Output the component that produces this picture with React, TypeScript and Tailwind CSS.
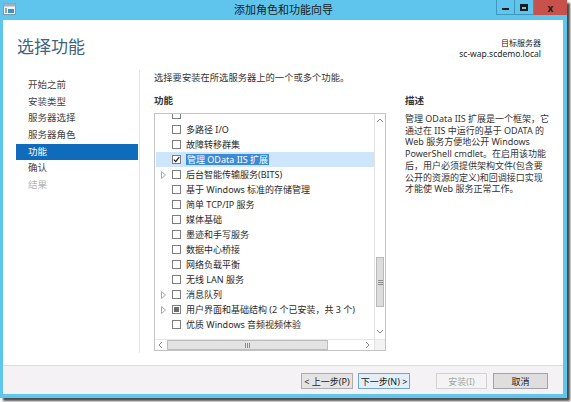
import React from 'react';

const navItems = [
  { label: '开始之前' },
  { label: '安装类型' },
  { label: '服务器选择' },
  { label: '服务器角色' },
  { label: '功能', active: true },
  { label: '确认' },
  { label: '结果', disabled: true },
];

type Feature = {
  label: string;
  expand?: boolean;
  state?: 'checked' | 'partial';
  selected?: boolean;
};

const features: Feature[] = [
  { label: '' },
  { label: '多路径 I/O' },
  { label: '故障转移群集' },
  { label: '管理 OData IIS 扩展', state: 'checked', selected: true },
  { label: '后台智能传输服务(BITS)', expand: true },
  { label: '基于 Windows 标准的存储管理' },
  { label: '简单 TCP/IP 服务' },
  { label: '媒体基础' },
  { label: '墨迹和手写服务' },
  { label: '数据中心桥接' },
  { label: '网络负载平衡' },
  { label: '无线 LAN 服务' },
  { label: '消息队列', expand: true },
  { label: '用户界面和基础结构 (2 个已安装，共 3 个)', expand: true, state: 'partial' },
  { label: '优质 Windows 音频视频体验' },
];

const description = [
  '管理 OData IIS 扩展是一个框架，它',
  '通过在 IIS 中运行的基于 ODATA 的',
  'Web 服务方便地公开 Windows',
  'PowerShell cmdlet。在启用该功能',
  '后，用户必须提供架构文件(包含要',
  '公开的资源的定义)和回调接口实现',
  '才能使 Web 服务正常工作。',
];

const CheckBox: React.FC<{ state?: 'checked' | 'partial' }> = ({ state }) => (
  <span className="w-[9px] h-[9px] border border-[#7d7d7d] bg-white flex items-center justify-center shrink-0">
    {state === 'checked' && (
      <svg width="7" height="7" viewBox="0 0 7 7">
        <path d="M0.8 3.6 L2.7 5.6 L6.2 1.1" stroke="#1f1f1f" strokeWidth="1.3" fill="none" />
      </svg>
    )}
    {state === 'partial' && <span className="w-[5px] h-[5px] bg-[#6b6b6b]" />}
  </span>
);

const Expander = () => (
  <svg width="5" height="8" viewBox="0 0 5 8">
    <path d="M0.5 0.5 L4.5 4 L0.5 7.5 Z" stroke="#a8a8a8" strokeWidth="1" fill="none" />
  </svg>
);

const Chevron: React.FC<{ dir: 'up' | 'down' | 'left' | 'right' }> = ({ dir }) => {
  const d = {
    up: 'M1 5 L4 2 L7 5',
    down: 'M1 2 L4 5 L7 2',
    left: 'M5 1 L2 4 L5 7',
    right: 'M2 1 L5 4 L2 7',
  }[dir];
  return (
    <svg width="8" height="8" viewBox="0 0 8 8">
      <path d={d} stroke="#8a8a8a" strokeWidth="1" fill="none" />
    </svg>
  );
};

export default function App() {
  return (
    <div className="w-[571px] h-[402px] bg-white overflow-hidden font-['Noto_Sans','Noto_Sans_CJK_SC',sans-serif] text-[#222]">
      <div className="w-[567px] h-[398px] flex flex-col bg-[#5fc5ec] shadow-[3px_3px_2px_rgba(0,0,0,0.7)]">
        {/* title bar */}
        <div className="h-[20px] grid grid-cols-[1fr_auto_1fr] shrink-0">
          <div className="pl-[3px] pt-[3px]">
            <svg width="13" height="12" viewBox="0 0 13 12">
              <rect x="0.5" y="0.5" width="12" height="11" fill="#f2f6f8" stroke="#7f99a8" />
              <rect x="0.5" y="0.5" width="12" height="3" fill="#9fb3c0" />
              <rect x="5" y="6" width="6" height="4" fill="#3c8fd0" />
              <rect x="2" y="5" width="2" height="5" fill="#9aa6ad" />
            </svg>
          </div>
          <div className="text-[11px] leading-[20px] text-[#1b1b1b]">添加角色和功能向导</div>
          <div className="flex justify-end items-start">
            <div className="w-[19px] h-[15px] border border-[#3f97bd] border-t-0 flex items-end justify-center pb-[4px]">
              <span className="w-[7px] h-[2px] bg-[#1c1c1c]" />
            </div>
            <div className="w-[19px] h-[15px] border border-[#3f97bd] border-t-0 border-l-0 flex items-center justify-center">
              <span className="w-[8px] h-[7px] border-[2px] border-[#1c1c1c] border-t-[3px]" />
            </div>
            <div className="w-[33px] h-[15px] bg-[#c9514b] flex items-center justify-center text-[10px] font-bold leading-none text-[#1c1c1c]">
              x
            </div>
          </div>
        </div>

        {/* client */}
        <div className="flex-1 ml-[3px] mr-[4px] mb-[4px] bg-white flex flex-col">
          <div className="h-[50px] flex justify-between items-start shrink-0">
            <div className="pl-[14px] pt-[17px] text-[17px] leading-[20px] text-[#3e6480]">选择功能</div>
            <div className="pr-[22px] pt-[18px] text-right">
              <div className="text-[8px] leading-[10px]">目标服务器</div>
              <div className="text-[8.5px] leading-[11px]">sc-wap.scdemo.local</div>
            </div>
          </div>

          <div className="flex-1 flex pb-[12px]">
            <div className="w-[137px] border-r border-[#e6e6e6] pt-[7px] pl-[13px] pr-[1px] shrink-0">
              {navItems.map((n) => (
                <div
                  key={n.label}
                  className={`h-[16.7px] leading-[16.7px] pl-[12px] text-[9.5px] ${
                    n.active ? 'bg-[#0f6cbd] text-white' : n.disabled ? 'text-[#b5b5b5]' : 'text-[#444]'
                  }`}
                >
                  {n.label}
                </div>
              ))}
            </div>

            <div className="flex-1 pl-[14px] pt-[1px]">
              <div className="text-[9.3px] leading-[14px] text-[#333]">选择要安装在所选服务器上的一个或多个功能。</div>
              <div className="flex mt-[9px]">
                <div className="w-[232px] shrink-0">
                  <div className="text-[9.5px] leading-[14px] font-semibold text-[#333]">功能</div>
                  <div className="mt-[5px] h-[238px] border border-[#c3c3c3] flex flex-col">
                    <div className="flex-1 flex min-h-0">
                      <div className="flex-1 overflow-hidden">
                        <div className="mt-[-7px]">
                          {features.map((f, i) => (
                            <div
                              key={i}
                              className={`h-[15px] ml-[1px] flex items-center ${f.selected ? 'bg-[#cde6fb]' : ''}`}
                            >
                              <span className="w-[16px] pl-[5px] flex items-center shrink-0">
                                {f.expand && <Expander />}
                              </span>
                              <CheckBox state={f.state} />
                              <span
                                className={`ml-[5px] text-[9px] leading-[11px] whitespace-nowrap ${
                                  f.selected ? 'bg-[#3b8ad9] text-white px-[1px] ml-[4px]' : 'text-[#2a2a2a]'
                                }`}
                              >
                                {f.label}
                              </span>
                            </div>
                          ))}
                        </div>
                      </div>
                      <div className="w-[11px] border-l border-[#e2e2e2] flex flex-col items-center shrink-0">
                        <div className="h-[14px] flex items-center">
                          <Chevron dir="up" />
                        </div>
                        <div className="flex-1 w-full">
                          <div className="mt-[129px] h-[50px] mx-[1px] bg-[#dcdcdc] border border-[#b9b9b9] flex items-center justify-center">
                            <div className="w-[5px] flex flex-col gap-[1px]">
                              <span className="h-px bg-[#8d8d8d]" />
                              <span className="h-px bg-[#8d8d8d]" />
                              <span className="h-px bg-[#8d8d8d]" />
                            </div>
                          </div>
                        </div>
                        <div className="h-[14px] flex items-center">
                          <Chevron dir="down" />
                        </div>
                      </div>
                    </div>
                    <div className="h-[11px] flex border-t border-[#e6e6e6] shrink-0">
                      <div className="w-[12px] flex items-center justify-center">
                        <Chevron dir="left" />
                      </div>
                      <div className="w-[161px] bg-[#e3e3e3] border border-[#bdbdbd] flex items-center justify-center">
                        <div className="h-[5px] flex gap-[1px]">
                          <span className="w-px bg-[#8d8d8d]" />
                          <span className="w-px bg-[#8d8d8d]" />
                          <span className="w-px bg-[#8d8d8d]" />
                        </div>
                      </div>
                      <div className="flex-1" />
                      <div className="w-[12px] flex items-center justify-center">
                        <Chevron dir="right" />
                      </div>
                      <div className="w-[11px] border-l border-[#e2e2e2] bg-[#f3f3f3]" />
                    </div>
                  </div>
                </div>

                <div className="ml-[19px] w-[150px]">
                  <div className="text-[9.5px] leading-[14px] font-semibold text-[#333]">描述</div>
                  <div className="mt-[5px] text-[9px] leading-[11.7px] text-[#333]">
                    {description.map((l) => (
                      <div key={l} className="whitespace-nowrap">
                        {l}
                      </div>
                    ))}
                  </div>
                </div>
              </div>
            </div>
          </div>

          <div className="h-[29px] shrink-0 border-t border-[#dcdcdc] bg-[#f4f2f5] flex justify-end items-start pt-[7px] pr-[15px] text-[9px]">
            <button className="w-[52px] h-[16px] bg-[#e4e4e4] border border-[#adadad] leading-none">&lt; 上一步(P)</button>
            <button className="ml-[5px] w-[52px] h-[16px] bg-[#e3eef9] border border-[#6fa6d6] leading-none">下一步(N) &gt;</button>
            <button className="ml-[26px] w-[51px] h-[16px] bg-[#f4f4f4] border border-[#d2d2d2] text-[#a5a5a5] leading-none">安装(I)</button>
            <button className="ml-[6px] w-[55px] h-[16px] bg-[#dedede] border border-[#a3a3a3] leading-none">取消</button>
          </div>
        </div>
      </div>
    </div>
  );
}
